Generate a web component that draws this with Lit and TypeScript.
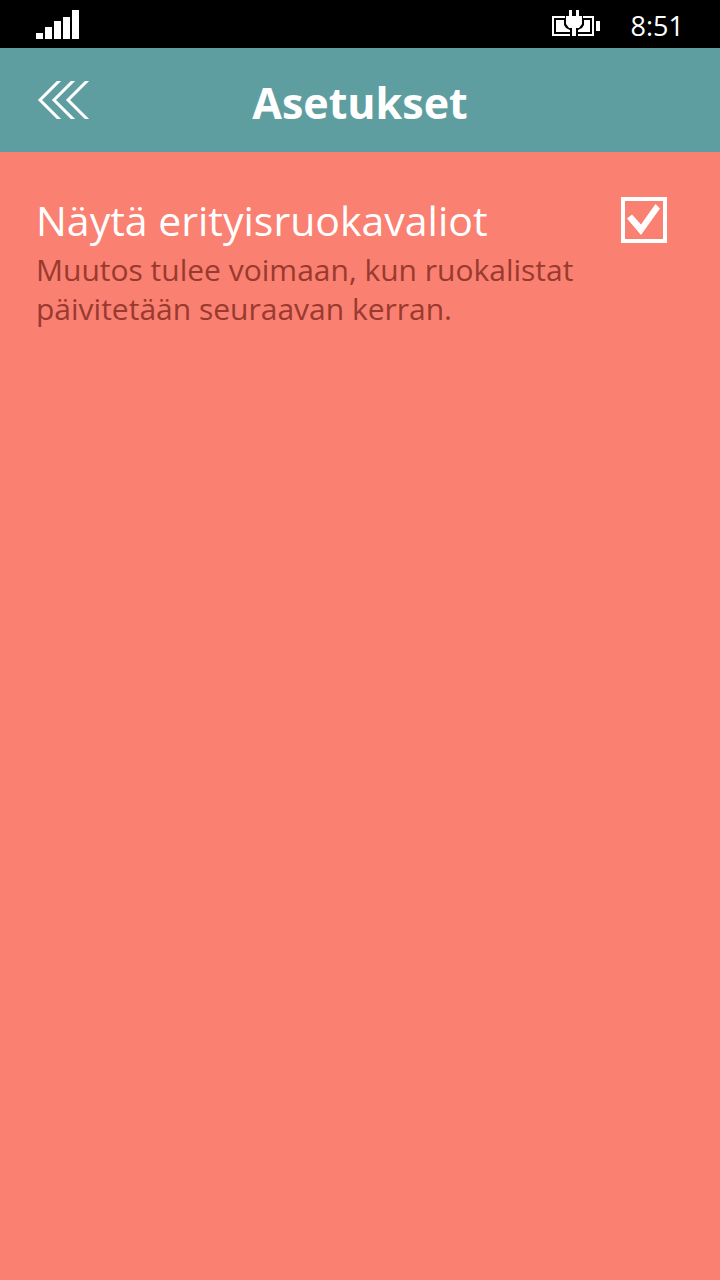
import { LitElement, html, css } from "lit";
import { customElement, state } from "lit/decorators.js";

@customElement("app-root")
export class AppRoot extends LitElement {
  static styles = css`
    :host {
      display: flex;
      flex-direction: column;
      min-height: 100vh;
      background: #fa8072;
      color: #fff;
      font-family: "Open Sans", "Noto Sans", sans-serif;
    }
    .status {
      display: flex;
      align-items: center;
      height: 48px;
      padding: 0 36px;
      background: #000;
    }
    .battery {
      margin-left: auto;
      margin-right: 31px;
    }
    .time {
      padding-top: 4px;
      font-size: 27px;
      line-height: 44px;
    }
    svg {
      display: block;
    }
    .header {
      display: grid;
      grid-template-columns: 54px 1fr 54px;
      align-items: center;
      height: 104px;
      padding: 0 36px;
      background: #5f9ea0;
    }
    .back {
      padding: 0;
      border: 0;
      background: none;
      color: inherit;
    }
    h1 {
      margin: 0;
      padding-top: 6px;
      font-size: 43px;
      line-height: 64px;
      font-weight: 700;
      text-align: center;
    }
    .content {
      padding: 40px 36px;
    }
    .row {
      display: flex;
      align-items: center;
      justify-content: space-between;
      padding-right: 17px;
    }
    .label {
      font-size: 41px;
      line-height: 56px;
    }
    .box {
      display: grid;
    }
    .box input,
    .box svg {
      grid-area: 1 / 1;
    }
    .box input {
      appearance: none;
      width: 46px;
      height: 46px;
      margin: 0;
      border: 4px solid #fff;
    }
    .box svg {
      pointer-events: none;
    }
    .hint {
      margin: 2px 0 0;
      color: #993a2e;
      font-size: 30px;
      line-height: 39px;
    }
  `;

  @state() private showDiets = true;

  render() {
    return html`
      <div class="status">
        <svg width="43" height="30" viewBox="0 0 43 30" fill="#fff" aria-hidden="true">
          <path d="M0 24h7v6H0zM9 18h7v12H9zM18 12h7v18h-7zM27 8h7v22h-7zM36 1h7v29h-7z" />
        </svg>
        <svg class="battery" width="48" height="28" viewBox="0 0 48 28" fill="#fff" aria-hidden="true">
          <path d="M0 6h13v2H2v16h16v2H0zM31 6h11v20H26v-2h14V8h-9zM44 11h4v10h-4z" />
          <path d="M4 10h8v5l2 3 4 2v2H4zM38 10h-6v5l-2 3-4 2v2h12z" />
          <path d="M17 0h3v6h4V0h3v6h3v8l-3 4h-3v8h-4v-8h-3l-3-4V6h3z" />
        </svg>
        <span class="time">8:51</span>
      </div>
      <header class="header">
        <button class="back" type="button" aria-label="Takaisin">
          <svg width="54" height="38" viewBox="0 0 54 38" fill="none" stroke="#fff" stroke-width="3">
            <path d="M25 -2L4 19l21 21M39 -2L18 19l21 21M53 -2L32 19l21 21" />
          </svg>
        </button>
        <h1>Asetukset</h1>
      </header>
      <main class="content">
        <div class="row">
          <label class="label" for="diets">Näytä erityisruokavaliot</label>
          <span class="box">
            <input
              id="diets"
              type="checkbox"
              aria-describedby="diets-hint"
              .checked=${this.showDiets}
              @change=${(e: Event) => (this.showDiets = (e.target as HTMLInputElement).checked)}
            />
            ${this.showDiets
              ? html`<svg width="46" height="46" viewBox="0 0 46 46" fill="#fff">
                  <path d="M6 21.500L11 17.500L20 27.500L34.500 7L39 11.500L20 38z" />
                </svg>`
              : null}
          </span>
        </div>
        <p class="hint" id="diets-hint">Muutos tulee voimaan, kun ruokalistat päivitetään seuraavan kerran.</p>
      </main>
    `;
  }
}
